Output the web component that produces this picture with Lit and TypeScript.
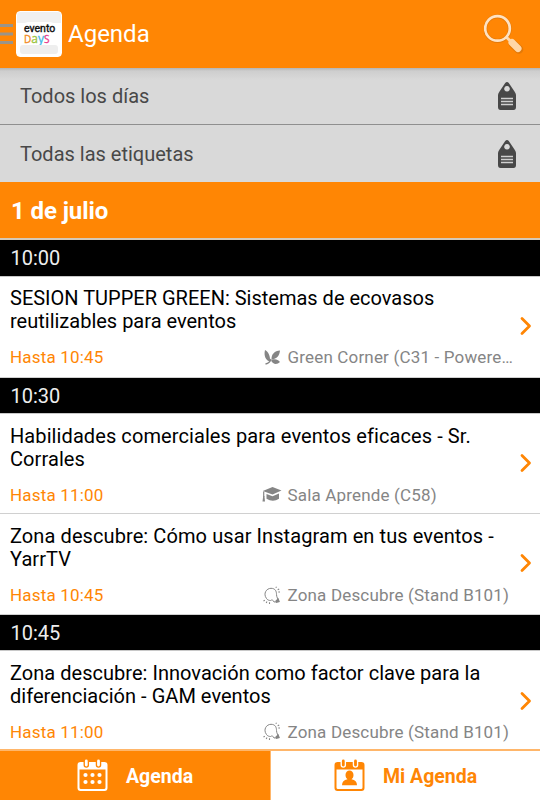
import { LitElement, html, css, svg } from "lit";
import { customElement, property } from "lit/decorators.js";

const tagIcon = html`<svg class="tag" width="20" height="30" viewBox="0 0 20 30">
  <path fill="#484848" fill-rule="evenodd" d="M8.2 2Q10 .2 11.8 2L17.5 10.5Q19 12.500 19 14V26Q19 29 16.500 29H3.500Q1 29 1 26V14Q1 12.500 2.500 10.500ZM10 5a2.800 2.800 0 1 0 .01 0Z"/>
  <path stroke="#d0d0d0" stroke-width="1.500" d="M4 17.500H16M4 20.500H16M4 23.500H16"/>
</svg>`;

const venueIcons: Record<string, unknown> = {
  leaf: svg`<path fill="#858585" d="M3 2C6.500 4 8.500 8 8 13.500C4 12.500 1.500 8 3 2ZM18 2.500C17.500 7.500 15 11 9.500 11.500C9.500 6 12.500 3 18 2.500ZM9 12.500C12 10.500 15.500 11 18 14C15 17 11 16.500 9 12.500Z"/>
    <path fill="none" stroke="#858585" stroke-width="1.300" d="M3.500 16Q8 15 9 11"/>`,
  cap: svg`<path fill="#858585" d="M.8 6L10.500 2L19.500 5.500L10.500 9.500ZM4.500 9L10.500 11.200L17 8.500V13.800Q11 17.500 4.500 13.800Z"/>
    <path fill="none" stroke="#858585" stroke-width="1.200" d="M1.700 6.500V12"/><path fill="#858585" d="M1.200 11H2.400L3 16.500H.5Z"/>`,
  bulb: svg`<g fill="none" stroke="#858585" stroke-width="1"><path d="M4.500 12.500C.8 7.500 4.500 2.300 9 2.300C13.500 2.300 14.500 5.500 14.500 8.500C14.500 11 16 13 17 15.500L12 16C11.500 14 9.500 13.500 8.500 14.500C7 14.500 5.500 14 4.500 12.500Z"/>
    <path stroke-width="1.100" d="M13.800 1.800L14.500 .8M15.700 3.800L17.200 3M16.300 6H18M2.800 14.200L1.500 15M5 15.500L4.200 17M7.500 16.200V18"/></g>
    <path fill="#858585" d="M13.500 14.500L16.500 12L17.800 16L14 17Z"/>`,
};

const calendarDots = svg`<g fill="currentColor">${[8.5, 15.5, 22.5].map(
  (x) => svg`<circle cx=${x} cy="16" r="2.100"/><circle cx=${x} cy="23" r="2.100"/>`
)}</g>`;

const calendarPerson = svg`<path fill="currentColor" d="M15.500 11.500a4 4.600 0 0 1 4 4.600c0 2.200-1 3.400-2 4.200q5.500 1 5.500 6H8q0-5 5.500-6c-1-.8-2-2-2-4.200a4 4.600 0 0 1 4-4.600Z"/>`;

const calendar = (inner: unknown, gap: string) => html`<svg width="31" height="33" viewBox="0 0 31 33">
  <path fill="currentColor" fill-rule="evenodd" d="M3.500 3H27.500Q30.500 3 30.500 6V29Q30.500 32 27.500 32H3.500Q.5 32 .5 29V6Q.5 3 3.500 3ZM2.500 10.500V28.500Q2.500 30 4 30H27Q28.500 30 28.500 28.500V10.500Z"/>
  <g stroke=${gap} stroke-width="5.500" stroke-linecap="round"><path d="M9.300 1V6M21.500 1V6"/></g>
  <g stroke="currentColor" stroke-width="2.800" stroke-linecap="round"><path d="M9.300 2V6M21.500 2V6"/></g>
  ${inner}
</svg>`;

interface Talk { title: string; tracking: number; until: string; icon: string; venue: string; }
interface Slot { time: string; talks: Talk[]; }

const slots: Slot[] = [
  { time: "10:00", talks: [
    { title: "SESION TUPPER GREEN: Sistemas de ecovasos reutilizables para eventos", tracking: 0, until: "10:45", icon: "leaf", venue: "Green Corner (C31 - Powere…" },
  ] },
  { time: "10:30", talks: [
    { title: "Habilidades comerciales para eventos eficaces - Sr. Corrales", tracking: 0.09, until: "11:00", icon: "cap", venue: "Sala Aprende (C58)" },
    { title: "Zona descubre: Cómo usar Instagram en tus eventos - YarrTV", tracking: 0.09, until: "10:45", icon: "bulb", venue: "Zona Descubre (Stand B101)" },
  ] },
  { time: "10:45", talks: [
    { title: "Zona descubre: Innovación como factor clave para la diferenciación - GAM eventos", tracking: 0.03, until: "11:00", icon: "bulb", venue: "Zona Descubre (Stand B101)" },
  ] },
];

@customElement("agenda-talk")
class AgendaTalk extends LitElement {
  @property({ attribute: false }) talk!: Talk;

  static styles = css`
    :host { display: flex; box-sizing: border-box; height: 100.3px; background: #fff; border-bottom: 1px solid #d0d0d0; }
    .body { flex: none; width: 515px; box-sizing: border-box; padding: 10.750px 0 0 10px; }
    .title { height: 46px; padding-right: 8px; font-size: 20px; line-height: 23px; color: #000; }
    .meta { display: grid; grid-template-columns: 252px 25.500px 227px; align-items: center; padding-top: 13px; font-size: 17px; line-height: 22px; letter-spacing: 0.17px; color: #858585; }
    .until { color: #ff8604; }
    .venue { white-space: nowrap; }
    .icon { display: block; }
    .arrow { flex: none; align-self: center; margin: 0 0 1px 4px; }
  `;

  render() {
    return html`
      <div class="body">
        <div class="title" style="letter-spacing: ${this.talk.tracking}px">${this.talk.title}</div>
        <div class="meta">
          <span class="until">Hasta ${this.talk.until}</span>
          <svg class="icon" width="20" height="19" viewBox="0 0 20 19">${venueIcons[this.talk.icon]}</svg>
          <span class="venue">${this.talk.venue}</span>
        </div>
      </div>
      <svg class="arrow" width="14" height="20" viewBox="0 0 14 20"><path d="M3 2.500L10.500 10L3 17.500" fill="none" stroke="#ff8604" stroke-width="2.800" stroke-linecap="round" stroke-linejoin="round"/></svg>
    `;
  }
}

@customElement("app-root")
class AppRoot extends LitElement {
  static styles = css`
    :host { display: flex; flex-direction: column; width: 540px; height: 800px; overflow: hidden; background: #fff; font-family: Roboto, "Liberation Sans", sans-serif; }
    .top { flex: none; display: flex; align-items: center; height: 68px; box-sizing: border-box; background: #ff8604; color: #fff; }
    .menu { width: 13px; margin-right: 3px; display: block; }
    .logo { flex: none; display: flex; flex-direction: column; align-items: flex-start; box-sizing: border-box; width: 46px; height: 46px; margin-top: -1px; padding: 11px 0 0 7px; border-radius: 4px; background: radial-gradient(ellipse 46px 10px at 50% 20px, #fff 98%, transparent), linear-gradient(#f0f0f0 17px, #fff 17px); border: 1px solid #fff; }
    .brand { height: 11px; line-height: 11px; font-size: 10.500px; color: #111; -webkit-text-stroke: 0.400px #111; }
    .days { display: flex; height: 10px; line-height: 10px; font-family: "Open Sans", sans-serif; font-size: 12px; white-space: nowrap; -webkit-text-stroke: 0.300px currentColor; }
    .d { color: #f28a22; -webkit-text-stroke-color: #f28a22; } .a { color: #9bc43b; -webkit-text-stroke-color: #9bc43b; } .y { color: #43b8e8; -webkit-text-stroke-color: #43b8e8; } .s { color: #e93b8c; -webkit-text-stroke-color: #e93b8c; }
    .d, .s { font-size: 10px; }
    .plate { width: 38px; height: 9px; margin: 1px 0 0 -4px; border-radius: 3px; background: #eee; }
    .heading { flex: 1; margin-left: 6px; font-size: 24px; line-height: 30px; }
    .search { margin-right: 16px; display: block; }
    .filter { flex: none; display: flex; align-items: center; justify-content: space-between; box-sizing: border-box; height: 57px; padding: 0 23px 0 20px; background: #d9d9d9; color: #484848; font-size: 20px; border-bottom: 1px solid #8f8f8f; }
    .first { background: linear-gradient(#b4b4b4, #cecece 3px, #d9d9d9 12px); }
    .last { border-bottom: 0; }
    .day { flex: none; box-sizing: border-box; height: 58px; padding-left: 11px; line-height: 58px; background: #ff8604; color: #fff; font-size: 24px; font-weight: 700; letter-spacing: -0.1px; border-bottom: 2px solid #d4c8b8; }
    .list { flex: 1; min-height: 0; overflow: hidden; }
    .slot agenda-talk:only-of-type { height: 101px; }
    .time { box-sizing: border-box; height: 36.500px; padding-left: 10.500px; line-height: 37px; background: #000; color: #eee; font-size: 20px; border-bottom: 1px solid #c8c8c8; }
    .tabs { flex: none; display: flex; height: 51px; }
    .tab { flex: none; width: 270px; display: flex; align-items: center; box-sizing: border-box; gap: 18px; border-top: 2px solid #ffb66a; font-size: 19.500px; font-weight: 700; }
    .tab span { padding-top: 1px; }
    .tab.on { background: #ff8604; color: #fff; padding-left: 77px; }
    .tab.off { background: #fff; color: #ff8604; padding-left: 63px; border-left: 1px solid #ffb66a; }
  `;

  render() {
    return html`
      <header class="top">
        <svg class="menu" width="13" height="22" viewBox="0 0 13 22"><path stroke="#999489" stroke-width="3" d="M0 2.500H13M0 11H13M0 19.500H13"/></svg>
        <div class="logo">
          <div class="brand">evento</div>
          <div class="days"><span class="d">D</span><span class="a">a</span><span class="y">y</span><span class="s">S</span></div>
          <div class="plate"></div>
        </div>
        <div class="heading">Agenda</div>
        <svg class="search" width="40" height="40" viewBox="0 0 40 40">
          <g fill="none" stroke="#c86b0c" stroke-opacity=".5"><circle cx="13.500" cy="14.700" r="12.300" stroke-width="3.800"/><path d="M29 30L35 35.500" stroke-width="8.500" stroke-linecap="round"/></g>
          <path d="M22 23L27 27.500" stroke="#ffd9ad" stroke-width="3"/>
          <circle cx="13.500" cy="14.400" r="12.300" fill="none" stroke="#ffe2c1" stroke-width="2.700"/>
          <path d="M28 28.500L34 34.500" stroke="#ffd6a6" stroke-width="7" stroke-linecap="round"/>
        </svg>
      </header>
      <div class="filter first"><span>Todos los días</span>${tagIcon}</div>
      <div class="filter last"><span>Todas las etiquetas</span>${tagIcon}</div>
      <div class="day">1 de julio</div>
      <main class="list">
        ${slots.map((s) => html`<section class="slot">
          <div class="time">${s.time}</div>
          ${s.talks.map((t) => html`<agenda-talk .talk=${t}></agenda-talk>`)}
        </section>`)}
      </main>
      <nav class="tabs">
        <div class="tab on">${calendar(calendarDots, "#ff8604")}<span>Agenda</span></div>
        <div class="tab off">${calendar(calendarPerson, "#fff")}<span>Mi Agenda</span></div>
      </nav>
    `;
  }
}
